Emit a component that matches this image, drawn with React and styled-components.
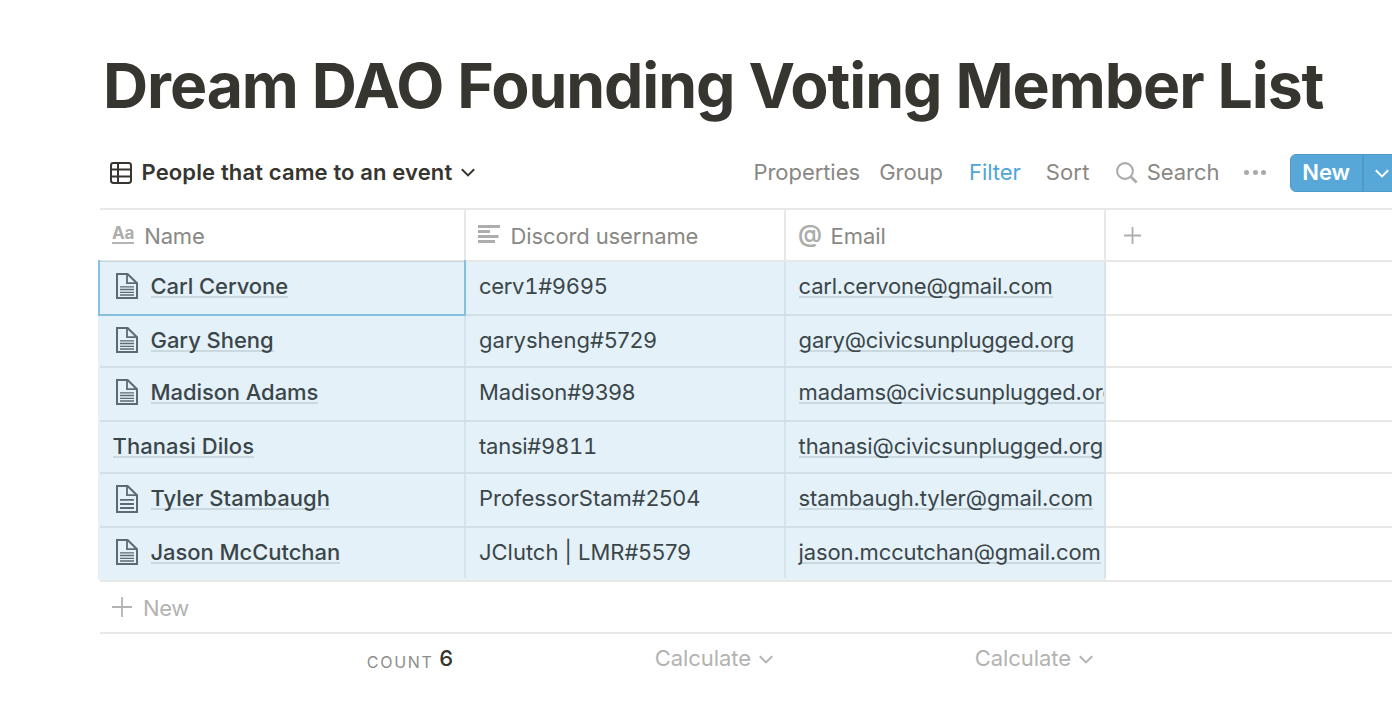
import React from 'react';
import styled, { createGlobalStyle, css } from 'styled-components';

const GlobalStyle = createGlobalStyle`
  *, *::before, *::after { box-sizing: border-box; }
  body {
    margin: 0;
    background: #fff;
    color: #37352f;
    font-family: Inter, "Liberation Sans", sans-serif;
    font-size: 22px;
    overflow: hidden;
  }
`;

const line = '#e8e8e7';
const selected = '#e4f1f9';
const selectedLine = '#d2dfe6';
const muted = '#898884';
const faint = '#b3b3b1';
const accent = '#57a8d8';

const Page = styled.main`
  width: 1392px;
  height: 712px;
  overflow: hidden;
  padding-top: 46px;
`;

const Title = styled.h1`
  margin: 0 0 0 103px;
  font-size: 62.5px;
  line-height: 78px;
  font-weight: 700;
  letter-spacing: -1.08px;
  word-spacing: 0.3px;
  white-space: nowrap;
`;

const Toolbar = styled.div`
  display: flex;
  align-items: flex-start;
  height: 38px;
  margin-top: 30px;
  padding-left: 110px;
  line-height: 36px;
  color: ${muted};
  white-space: nowrap;
`;

const ViewSwitch = styled.div`
  flex: 0 0 643.5px;
  display: flex;
  align-items: center;
  height: 37px;
  color: #37352f;
  font-weight: 600;
  letter-spacing: 0.13px;
`;

const ViewName = styled.span`
  margin: 0 8.6px 0 9.5px;
  height: 37px;
`;

const Action = styled.span`
  flex: none;
  letter-spacing: ${p => p.$track || -0.06}px;
  margin-right: ${p => p.$gap}px;
  color: ${p => (p.$active ? '#50a5d8' : 'inherit')};
`;

const SearchAction = styled.span`
  flex: none;
  display: flex;
  letter-spacing: -0.08px;
  margin-right: 25px;
  svg { margin: 8px 9.2px 0 0; }
`;

const MoreDots = styled.span`
  flex: none;
  display: flex;
  gap: 3.5px;
  margin: 16px 24px 0 0;
`;

const Dot = styled.i`
  width: 5px;
  height: 5px;
  border-radius: 50%;
  background: #a9a9a7;
`;

const NewButton = styled.div`
  flex: none;
  display: flex;
  width: 112px;
  height: 38px;
  border: 1px solid #4f9ac6;
  border-radius: 6px;
  background: ${accent};
  color: #fff;
  font-weight: 600;
  letter-spacing: -0.1px;
`;

const NewLabel = styled.span`
  width: 73px;
  padding-left: 11px;
  line-height: 35px;
  border-right: 2px solid #4f99c4;
`;

const NewMenu = styled.span`
  padding: 14px 0 0 11px;
  display: flex;
  align-items: flex-start;
`;

const Table = styled.section`
  margin: 16px 0 0 100px;
  border-top: 2px solid ${line};
`;

const HeaderRow = styled.div`
  display: flex;
  height: 52px;
  border-bottom: 2px solid ${line};
  color: ${muted};
`;

const HeaderCell = styled.div`
  display: flex;
  align-items: flex-start;
  width: ${p => p.$width}px;
  padding: 0 0 0 ${p => p.$pad || 12}px;
  border-right: ${p => (p.$open ? '0' : `2px solid ${line}`)};
  line-height: 52px;
  letter-spacing: ${p => p.$track || 0}px;
`;

const IconSlot = styled.span`
  display: flex;
  width: ${p => p.$width}px;
  padding-top: ${p => p.$top}px;
  color: #adadab;
`;

const TitleGlyph = styled.b`
  height: 17px;
  border-bottom: 2px solid #b5b5b3;
  font-size: 17px;
  line-height: 13px;
  letter-spacing: -0.2px;
`;

const AtGlyph = styled.b`
  font-size: 24px;
  font-weight: 600;
  line-height: 48px;
`;

const Row = styled.div`
  display: flex;
  height: ${p => p.$height}px;
  border-bottom: 2px solid ${line};
`;

const Selection = styled.div`
  position: relative;
  display: flex;
  width: 1006px;
  background: ${selected};
  color: #3b4649;
  border-bottom: 2px solid ${p => (p.$last ? line : selectedLine)};
  margin-bottom: -2px;
  &::before {
    content: '';
    position: absolute;
    left: -2px;
    top: 0;
    bottom: ${p => (p.$last ? 0 : -2)}px;
    width: 2px;
    background: ${selected};
  }
`;

const Cell = styled.div`
  position: relative;
  display: flex;
  width: ${p => p.$width}px;
  padding-left: 13px;
  border-right: 2px solid #d6e3ea;
  margin-bottom: ${p => (p.$last ? 2 : 0)}px;
  line-height: 48px;
  white-space: nowrap;
  overflow: ${p => (p.$clip ? 'hidden' : 'visible')};
  font-variant-numeric: ${p => (p.$tabular ? 'tabular-nums' : 'normal')};
  letter-spacing: ${p => p.$track || 0}px;
  ${p => p.$focused && css`
    &::after {
      content: '';
      position: absolute;
      z-index: 1;
      left: -2px;
      right: -2px;
      top: -2px;
      bottom: -2px;
      border: 2px solid #86bfe0;
      border-top: 0;
      background: linear-gradient(#bfd5e2, #bfd5e2) 0 1px / 100% 1px no-repeat;
    }
  `}
`;

const PageIconSlot = styled.span`
  width: 38px;
  padding: 11px 0 0 3.5px;
  display: flex;
`;

const Underlined = styled.span`
  flex: none;
  height: 36px;
  border-bottom: 2px solid #cad8df;
  font-weight: ${p => p.$weight || 400};
  letter-spacing: ${p => p.$track || 0}px;
`;

const NameContent = styled.div`
  display: flex;
  margin-left: -0.5px;
`;

const EmailContent = styled(NameContent)`
  margin-left: -0.4px;
`;

const AddRow = styled.div`
  display: flex;
  height: 52px;
  padding-left: 12px;
  border-bottom: 2px solid ${line};
  line-height: 52px;
  letter-spacing: -0.4px;
  color: ${faint};
  svg { margin: 15px 11px 0 0; }
`;

const Footer = styled.div`
  display: flex;
  line-height: 48px;
`;

const FooterCell = styled.div`
  display: flex;
  justify-content: flex-end;
  width: ${p => p.$width}px;
  padding-right: 13px;
  letter-spacing: -0.06px;
  color: ${faint};
  svg { margin: 21px 0 0 8px; }
`;

const CountLabel = styled.span`
  font-size: 16px;
  line-height: 57px;
  letter-spacing: 1.75px;
  margin-right: 5.5px;
  color: #8e8d8a;
`;

const CountValue = styled.span`
  font-weight: 500;
  color: #37352f;
`;

const Chevron = ({ width = 14, stroke = 2 }) => (
  <svg width={width} height="9" viewBox="0 0 14 9" fill="none" stroke="currentColor" strokeWidth={stroke}>
    <path d="M0.8 1.2 7 7.4 13.2 1.2" />
  </svg>
);

const TableIcon = () => (
  <svg width="22" height="22" viewBox="0 0 22 22" fill="none" stroke="currentColor" strokeWidth="2">
    <rect x="1" y="1" width="20" height="20" rx="2.4" />
    <path d="M1 7.5H21M1 14.5H21M8 1V21" />
  </svg>
);

const SearchIcon = () => (
  <svg width="22" height="22" viewBox="0 0 22 22" fill="none" stroke="#acacaa">
    <circle cx="9" cy="9" r="7.9" strokeWidth="2.1" />
    <path d="M14.8 14.8 20.6 20.4" strokeWidth="2.8" />
  </svg>
);

const PlusIcon = ({ size }) => (
  <svg width={size} height={size} viewBox={`0 0 ${size} ${size}`} stroke="currentColor" strokeWidth="1.8">
    <path d={`M${size / 2} 0V${size}M0 ${size / 2}H${size}`} />
  </svg>
);

const TextIcon = () => (
  <svg width="22" height="18" viewBox="0 0 22 18" stroke="currentColor" strokeWidth="3" fill="none">
    <path d="M0 1.5H22M0 6.5H12M0 11.5H20.5M0 16.5H17" />
  </svg>
);

const PageIcon = ({ tall }) => (
  <svg width="22" height={tall ? 28 : 26} viewBox={`0 0 22 ${tall ? 28 : 26}`} fill="none" stroke="#5e6a6e">
    <path d={`M1 1H11.6L21 10.2V${tall ? 27 : 25}H1Z`} strokeWidth="2" />
    <path d="M11 1V10.2H21" strokeWidth="1.8" />
    {tall
      ? <path d="M4 14.8H18M4 19H18M4 23H18" strokeWidth="1.8" />
      : <path d="M4 13.8H18M4 16.5H18M4 19.3H18M4 22H18" strokeWidth="1.35" />}
  </svg>
);

const members = [
  { name: 'Carl Cervone', nt: -0.08, discord: 'cerv1#9695', dt: -0.3, tabular: true, email: 'carl.cervone@gmail.com', et: -0.215, height: 54 },
  { name: 'Gary Sheng', nt: -0.046, discord: 'garysheng#5729', dt: 0.02, email: 'gary@civicsunplugged.org', et: -0.19, height: 52 },
  { name: 'Madison Adams', nt: -0.084, discord: 'Madison#9398', dt: -0.085, email: 'madams@civicsunplugged.org', et: -0.16, height: 54 },
  { name: 'Thanasi Dilos', nt: 0.03, bare: true, discord: 'tansi#9811', dt: -0.25, tabular: true, email: 'thanasi@civicsunplugged.org', et: -0.13, height: 52 },
  { name: 'Tyler Stambaugh', nt: 0.04, tall: true, discord: 'ProfessorStam#2504', dt: -0.037, email: 'stambaugh.tyler@gmail.com', et: -0.12, height: 54 },
  { name: 'Jason McCutchan', nt: -0.06, discord: 'JClutch | LMR#5579', dt: -0.02, email: 'jason.mccutchan@gmail.com', et: -0.14, height: 54 },
];

export default function App() {
  return (
    <Page>
      <GlobalStyle />
      <Title>Dream DAO Founding Voting Member List</Title>
      <Toolbar>
        <ViewSwitch>
          <TableIcon />
          <ViewName>People that came to an event</ViewName>
          <Chevron />
        </ViewSwitch>
        <Action $gap={19.3}>Properties</Action>
        <Action $gap={26}>Group</Action>
        <Action $gap={25} $active>Filter</Action>
        <Action $gap={26} $track={0.2}>Sort</Action>
        <SearchAction><SearchIcon />Search</SearchAction>
        <MoreDots><Dot /><Dot /><Dot /></MoreDots>
        <NewButton>
          <NewLabel>New</NewLabel>
          <NewMenu><Chevron /></NewMenu>
        </NewButton>
      </Toolbar>
      <Table>
        <HeaderRow>
          <HeaderCell $width={366} $track={-0.2}>
            <IconSlot $width={32.3} $top={17}><TitleGlyph>Aa</TitleGlyph></IconSlot>Name
          </HeaderCell>
          <HeaderCell $width={320} $track={-0.12}>
            <IconSlot $width={32.5} $top={15}><TextIcon /></IconSlot>Discord username
          </HeaderCell>
          <HeaderCell $width={320} $track={-0.044}>
            <IconSlot $width={32.6} $top={0}><AtGlyph>@</AtGlyph></IconSlot>Email
          </HeaderCell>
          <HeaderCell $width={286} $pad={17.5} $open>
            <IconSlot $width={17} $top={16.5}><PlusIcon size={17} /></IconSlot>
          </HeaderCell>
        </HeaderRow>
        {members.map((m, i) => {
          const last = i === members.length - 1;
          return (
            <Row key={m.name} $height={m.height}>
              <Selection $last={last}>
                <Cell $width={366} $last={last} $focused={i === 0}>
                  <NameContent>
                    {!m.bare && <PageIconSlot><PageIcon tall={m.tall} /></PageIconSlot>}
                    <Underlined $weight={500} $track={m.nt}>{m.name}</Underlined>
                  </NameContent>
                </Cell>
                <Cell $width={320} $last={last} $track={m.dt} $tabular={m.tabular}>{m.discord}</Cell>
                <Cell $width={320} $last={last} $clip>
                  <EmailContent><Underlined $track={m.et}>{m.email}</Underlined></EmailContent>
                </Cell>
              </Selection>
            </Row>
          );
        })}
        <AddRow><PlusIcon size={20} />New</AddRow>
        <Footer>
          <FooterCell $width={366}>
            <CountLabel>COUNT</CountLabel>
            <CountValue>6</CountValue>
          </FooterCell>
          <FooterCell $width={320}>Calculate<Chevron /></FooterCell>
          <FooterCell $width={320}>Calculate<Chevron /></FooterCell>
        </Footer>
      </Table>
    </Page>
  );
}
